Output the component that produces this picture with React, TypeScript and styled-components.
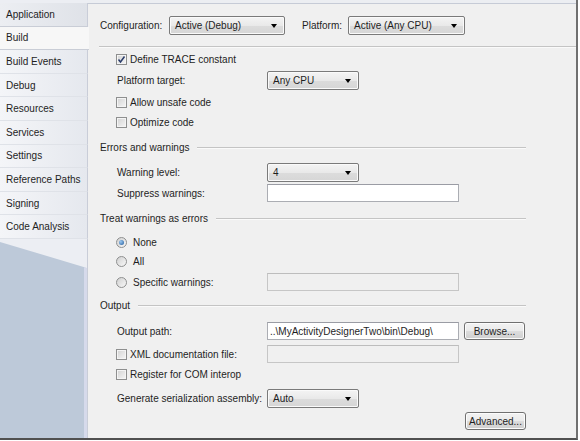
import React from "react";
import styled, { createGlobalStyle } from "styled-components";

const GlobalStyle = createGlobalStyle`
  body {
    margin: 0;
    background: #ffffff;
    font-family: "Liberation Sans", Arial, sans-serif;
    font-size: 10px;
    color: #1e1e1e;
  }
`;

const Frame = styled.div`
  width: 576px;
  height: 438px;
  display: flex;
  border-right: 2px solid #707070;
  border-bottom: 2px solid #505050;
  background: #eceef2;
`;

const Sidebar = styled.div`
  width: 88px;
  flex-shrink: 0;
  display: flex;
  flex-direction: column;
  padding-top: 3px;
  box-sizing: border-box;
  background: #eceef3;
`;

const Tab = styled.div<{ $active?: boolean }>`
  height: 23.6px;
  flex-shrink: 0;
  box-sizing: border-box;
  display: flex;
  align-items: center;
  padding-left: 6px;
  white-space: nowrap;
  position: relative;
  z-index: 1;
  background: ${({ $active }) =>
    $active ? "#f7f7f7" : "linear-gradient(to right, #f4f5f8, #e5e8ee)"};
  border-bottom: 1px solid ${({ $active }) => ($active ? "#c9cdd6" : "#dfe2e8")};
  border-right: ${({ $active }) => ($active ? "none" : "1px solid #c9cdd8")};
  margin-right: ${({ $active }) => ($active ? "-1px" : "0")};
  &:first-child {
    background: linear-gradient(to right, #eceef2, #dfe2e8);
    border-bottom-color: #c9cdd6;
  }
`;

const SidebarRest = styled.div`
  flex: 1;
  display: flex;
  padding-top: 3px;
  border-right: 1px solid #c9cdd8;
`;

const SidebarFill = styled.div`
  flex: 1;
  background: #bdc9d9;
  clip-path: polygon(0 0, 100% 26px, 100% 100%, 0 100%);
  border-right: 3px solid #d6daeb;
  border-top-right-radius: 6px;
`;

const Content = styled.div`
  flex: 1;
  margin-top: 3px;
  background: #f0f0f0;
  border-top: 1px solid #c6cbd6;
  padding: 11px 0 0 12px;
  display: flex;
  flex-direction: column;
`;

const Row = styled.div<{ $gap?: number; $indent?: number }>`
  height: 20px;
  flex-shrink: 0;
  display: flex;
  align-items: center;
  margin-top: ${({ $gap }) => $gap ?? 0}px;
  margin-left: ${({ $indent }) => $indent ?? 0}px;
  white-space: nowrap;
`;

const Label = styled.span<{ $width?: number; $gap?: number }>`
  width: ${({ $width }) => ($width ? `${$width}px` : "auto")};
  margin-left: ${({ $gap }) => $gap ?? 0}px;
  flex-shrink: 0;
`;

const Separator = styled.div`
  height: 1px;
  flex-shrink: 0;
  margin: 11px 0 0 -1px;
  background: #c4c4c4;
  border-bottom: 1px solid #fafafa;
`;

const Header = styled(Row)`
  width: 426px;
  &::after {
    content: "";
    flex: 1;
    height: 1px;
    margin-left: 8px;
    background: #c4c4c4;
    box-shadow: 0 1px 0 #fafafa;
  }
`;

const Select = styled.div<{ $width: number }>`
  width: ${({ $width }) => $width}px;
  height: 19px;
  box-sizing: border-box;
  border: 1px solid #7a7a7a;
  border-radius: 2px;
  background: linear-gradient(#f4f4f4, #e9e9e9 50%, #dcdcdc 51%, #d6d6d6);
  box-shadow: inset 0 0 0 1px #fafafa;
  display: flex;
  align-items: center;
  padding-left: 5px;
  position: relative;
  &::after {
    content: "";
    position: absolute;
    right: 7px;
    top: 7px;
    border-left: 3.5px solid transparent;
    border-right: 3.5px solid transparent;
    border-top: 4px solid #000;
  }
`;

const TextBox = styled.div<{ $disabled?: boolean }>`
  width: 192px;
  height: 18px;
  box-sizing: border-box;
  border: 1px solid ${({ $disabled }) => ($disabled ? "#c6c6c6" : "#abadb3")};
  border-top-color: ${({ $disabled }) => ($disabled ? "#bdbdbd" : "#9a9ca4")};
  background: ${({ $disabled }) => ($disabled ? "#f0f0f0" : "#ffffff")};
  display: flex;
  align-items: center;
  padding-left: 2px;
  overflow: hidden;
`;

const Button = styled.div<{ $gap?: number }>`
  width: 61px;
  height: 18px;
  box-sizing: border-box;
  margin-left: ${({ $gap }) => $gap ?? 0}px;
  border: 1px solid #707070;
  border-radius: 3px;
  background: linear-gradient(#f2f2f2, #ebebeb 50%, #dddddd 51%, #cfcfcf);
  box-shadow: inset 0 0 0 1px #fcfcfc;
  display: flex;
  align-items: center;
  justify-content: center;
`;

const Box = styled.span`
  width: 11px;
  height: 11px;
  box-sizing: border-box;
  flex-shrink: 0;
  margin-right: 3px;
  border: 1px solid #8e8f8f;
  background: linear-gradient(135deg, #d2d2d2, #f6f6f6);
  box-shadow: inset 0 0 0 1px #f4f4f4;
  display: flex;
  align-items: center;
  justify-content: center;
`;

const Radio = styled.span<{ $on?: boolean }>`
  width: 11px;
  height: 11px;
  box-sizing: border-box;
  flex-shrink: 0;
  margin-right: 6px;
  border-radius: 50%;
  border: 1px solid #8e8f8f;
  background: linear-gradient(135deg, #d0d0d0, #f8f8f8);
  display: flex;
  align-items: center;
  justify-content: center;
  &::after {
    content: "";
    display: ${({ $on }) => ($on ? "block" : "none")};
    width: 5px;
    height: 5px;
    border-radius: 50%;
    background: radial-gradient(circle at 35% 35%, #9cc8f0, #1f5a9c);
  }
`;

const RightAligned = styled.div`
  width: 426px;
  display: flex;
  justify-content: flex-end;
`;

const Check: React.FC<{ on?: boolean }> = ({ on }) => (
  <Box>
    {on && (
      <svg width="9" height="9" viewBox="0 0 9 9">
        <path d="M1.5 4.5 L3.5 7 L7.5 1.5" stroke="#2a3c6a" strokeWidth="1.5" fill="none" />
      </svg>
    )}
  </Box>
);

const tabs = [
  "Application",
  "Build",
  "Build Events",
  "Debug",
  "Resources",
  "Services",
  "Settings",
  "Reference Paths",
  "Signing",
  "Code Analysis",
];

export default function App() {
  return (
    <>
      <GlobalStyle />
      <Frame>
        <Sidebar>
          {tabs.map((t) => (
            <Tab key={t} $active={t === "Build"}>
              {t}
            </Tab>
          ))}
          <SidebarRest>
            <SidebarFill />
          </SidebarRest>
        </Sidebar>
        <Content>
          <Row>
            <Label $width={69}>Configuration:</Label>
            <Select $width={116}>Active (Debug)</Select>
            <Label $width={46} $gap={17}>
              Platform:
            </Label>
            <Select $width={117}>Active (Any CPU)</Select>
          </Row>
          <Separator />

          <Row $gap={1} $indent={16}>
            <Check on />
            Define TRACE constant
          </Row>
          <Row $gap={1} $indent={17}>
            <Label $width={150}>Platform target:</Label>
            <Select $width={92}>Any CPU</Select>
          </Row>
          <Row $gap={2} $indent={16}>
            <Check />
            Allow unsafe code
          </Row>
          <Row $indent={16}>
            <Check />
            Optimize code
          </Row>

          <Header $gap={5}>Errors and warnings</Header>
          <Row $gap={5} $indent={17}>
            <Label $width={150}>Warning level:</Label>
            <Select $width={92}>4</Select>
          </Row>
          <Row $gap={1} $indent={17}>
            <Label $width={150}>Suppress warnings:</Label>
            <TextBox />
          </Row>

          <Header $gap={5}>Treat warnings as errors</Header>
          <Row $gap={4} $indent={16}>
            <Radio $on />
            None
          </Row>
          <Row $gap={-1} $indent={16}>
            <Radio />
            All
          </Row>
          <Row $gap={1} $indent={16}>
            <Radio />
            <Label $width={134}>Specific warnings:</Label>
            <TextBox $disabled />
          </Row>

          <Header $gap={3}>Output</Header>
          <Row $gap={6} $indent={17}>
            <Label $width={150}>Output path:</Label>
            <TextBox>..\MyActivityDesignerTwo\bin\Debug\</TextBox>
            <Button $gap={5}>Browse...</Button>
          </Row>
          <Row $gap={3} $indent={16}>
            <Check />
            <Label $width={137}>XML documentation file:</Label>
            <TextBox $disabled />
          </Row>
          <Row $indent={16}>
            <Check />
            Register for COM interop
          </Row>
          <Row $gap={4} $indent={17}>
            <Label $width={150}>Generate serialization assembly:</Label>
            <Select $width={92}>Auto</Select>
          </Row>
          <Row $gap={3}>
            <RightAligned>
              <Button>Advanced...</Button>
            </RightAligned>
          </Row>
        </Content>
      </Frame>
    </>
  );
}
